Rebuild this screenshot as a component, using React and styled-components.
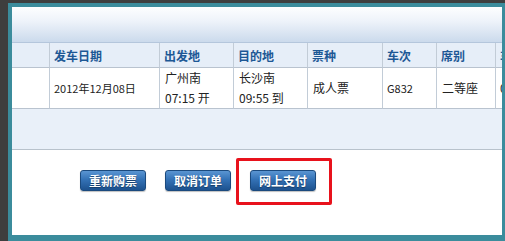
import React from "react";
import styled, { createGlobalStyle } from "styled-components";

const Global = createGlobalStyle`
  html, body { margin: 0; padding: 0; background: #3e3e3e; overflow: hidden; }
  body { width: 505px; height: 241px; font-family: "Noto Sans CJK SC", "Liberation Sans", sans-serif; }
`;

const Frame = styled.div`
  margin: 3px 0 0 8px;
  width: 490px;
  height: 228px;
  border-left: 4px solid #3b8c9c;
  border-top: 4px solid #3b8c9c;
  border-right: 4px solid #3b8c9c;
  border-bottom: 6px solid #3b8c9c;
  background: #ffffff;
  display: flex;
  flex-direction: column;
  overflow: hidden;
`;

const TitleBand = styled.div`
  height: 35px;
  background: linear-gradient(#fdfeff 0%, #eef3fa 40%, #cbdaec 100%);
  border-bottom: 1px solid #b4c6dc;
`;

const Table = styled.div`
  display: grid;
  grid-template-columns: 37px 110px 74px 74px 75px 54px 59px 40px;
  width: 490px;
  overflow: hidden;
`;

const HeadCell = styled.div`
  height: 24px;
  background: #e6eef8;
  border-left: ${(p) => (p.$first ? "none" : "1px solid #c2ccd7")};
  border-bottom: 1px solid #b9c3cf;
  display: flex;
  align-items: center;
  padding-left: 4px;
  font-size: 12px;
  font-weight: 700;
  color: #1d5895;
  white-space: nowrap;
  overflow: hidden;
`;

const DataCell = styled.div`
  height: 40px;
  background: #ffffff;
  border-left: ${(p) => (p.$first ? "none" : "1px solid #c2ccd7")};
  border-bottom: 1px solid #b9c3cf;
  display: flex;
  flex-direction: column;
  justify-content: center;
  padding-left: ${(p) => p.$pad || 4}px;
  font-size: ${(p) => p.$size || 12}px;
  line-height: 20px;
  color: #222222;
  white-space: nowrap;
  overflow: hidden;
`;

const InfoBand = styled.div`
  height: 40px;
  background: #e9f0f9;
  border-bottom: 1px solid #b8c2cc;
`;

const Actions = styled.div`
  display: flex;
  align-items: flex-start;
  padding: 8px 0 0 68px;
`;

const Highlight = styled.div`
  display: flex;
  align-items: flex-start;
  border: 3px solid #e8121c;
  border-radius: 2px;
  width: 96px;
  height: 47px;
  box-sizing: border-box;
  padding: 9px 0 0 11px;
  margin-left: 5px;
`;

const Button = styled.button`
  width: 66px;
  height: 21px;
  margin-top: ${(p) => p.$top || 0}px;
  margin-right: ${(p) => p.$gap || 0}px;
  border: 1px solid #1b4a7e;
  border-radius: 3px;
  background: linear-gradient(#5a95d2 0%, #3472b6 45%, #1d528f 100%);
  color: #ffffff;
  font-family: "Noto Sans CJK SC", sans-serif;
  font-size: 12px;
  font-weight: 700;
  text-shadow: 0 1px 1px #143a66;
  padding: 0;
  box-shadow: 0 1px 1px rgba(0, 0, 0, 0.25);
  line-height: 19px;
  flex: none;
`;

const heads = ["", "发车日期", "出发地", "目的地", "票种", "车次", "席别", "车厢"];

export default function App() {
  return (
    <>
      <Global />
      <Frame>
        <TitleBand />
        <Table>
          {heads.map((h, i) => (
            <HeadCell key={i} $first={i === 0}>{h}</HeadCell>
          ))}
          <DataCell $first />
          <DataCell $size={11}>2012年12月08日</DataCell>
          <DataCell $pad={5}>
            <span>广州南</span>
            <span>07:15 开</span>
          </DataCell>
          <DataCell $pad={5}>
            <span>长沙南</span>
            <span>09:55 到</span>
          </DataCell>
          <DataCell $pad={5}>成人票</DataCell>
          <DataCell $size={11}>G832</DataCell>
          <DataCell $pad={5}>二等座</DataCell>
          <DataCell>01</DataCell>
        </Table>
        <InfoBand />
        <Actions>
          <Button $top={12} $gap={19}>重新购票</Button>
          <Button $top={12}>取消订单</Button>
          <Highlight>
            <Button>网上支付</Button>
          </Highlight>
        </Actions>
      </Frame>
    </>
  );
}
